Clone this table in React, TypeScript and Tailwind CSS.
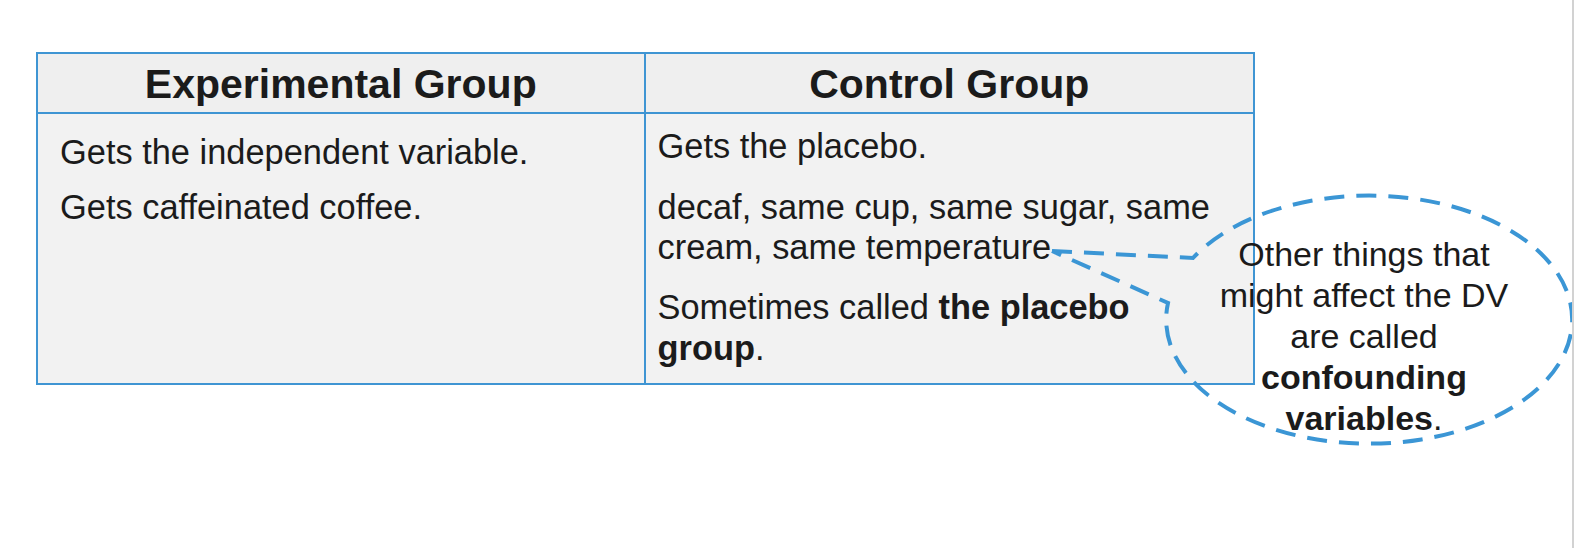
import React from "react";

export default function App() {
  const font = { fontFamily: '"Liberation Sans", Arial, sans-serif' };
  return (
    <div
      className="relative w-[1574px] h-[548px] bg-white border-r-2 border-[#d2d2d2] overflow-hidden text-[#1b1b1b]"
      style={font}
    >
      <div className="pt-[52px] pl-[36px]">
        <div className="w-[1219px] border-2 border-[#3f95d3] bg-[#f2f2f2]">
          <div className="grid grid-cols-2 h-[60px] bg-[#efefef] border-b-2 border-[#3f95d3]">
            <div className="flex items-center justify-center border-r-2 border-[#3f95d3] text-[41px] font-bold leading-none pt-[3px]">
              Experimental Group
            </div>
            <div className="flex items-center justify-center text-[41px] font-bold leading-none pt-[3px]">
              Control Group
            </div>
          </div>
          <div className="grid grid-cols-2 h-[269px]">
            <div className="border-r-2 border-[#3f95d3] pl-[22px] pt-[18px] text-[34.4px] leading-[40px] flex flex-col gap-[15px]">
              <p>Gets the independent variable.</p>
              <p>Gets caffeinated coffee.</p>
            </div>
            <div className="pl-[12px] pt-[12px] pr-[30px] text-[34.4px] leading-[40px] flex flex-col">
              <p>Gets the placebo.</p>
              <p className="mt-[21px]">
                decaf, same cup, same sugar, same cream, same temperature
              </p>
              <p className="mt-[20px] pr-[80px] leading-[41px]">
                Sometimes called <span className="font-bold">the placebo group</span>.
              </p>
            </div>
          </div>
        </div>
      </div>

      <svg
        className="absolute left-0 top-0 pointer-events-none"
        width="1574"
        height="548"
        viewBox="0 0 1574 548"
      >
        <path
          d="M1052 251 L1193 258 A203 124 0 1 1 1168 303 L1052 251"
          fill="none"
          stroke="#3b96d5"
          strokeWidth="4"
          strokeDasharray="20 12"
          strokeLinejoin="miter"
        />
      </svg>

      <div className="absolute left-[1184px] top-[234px] w-[360px] text-center text-[34px] leading-[41px]">
        <p>Other things that</p>
        <p>might affect the DV</p>
        <p>are called</p>
        <p className="font-bold">confounding</p>
        <p>
          <span className="font-bold">variables</span>.
        </p>
      </div>
    </div>
  );
}
